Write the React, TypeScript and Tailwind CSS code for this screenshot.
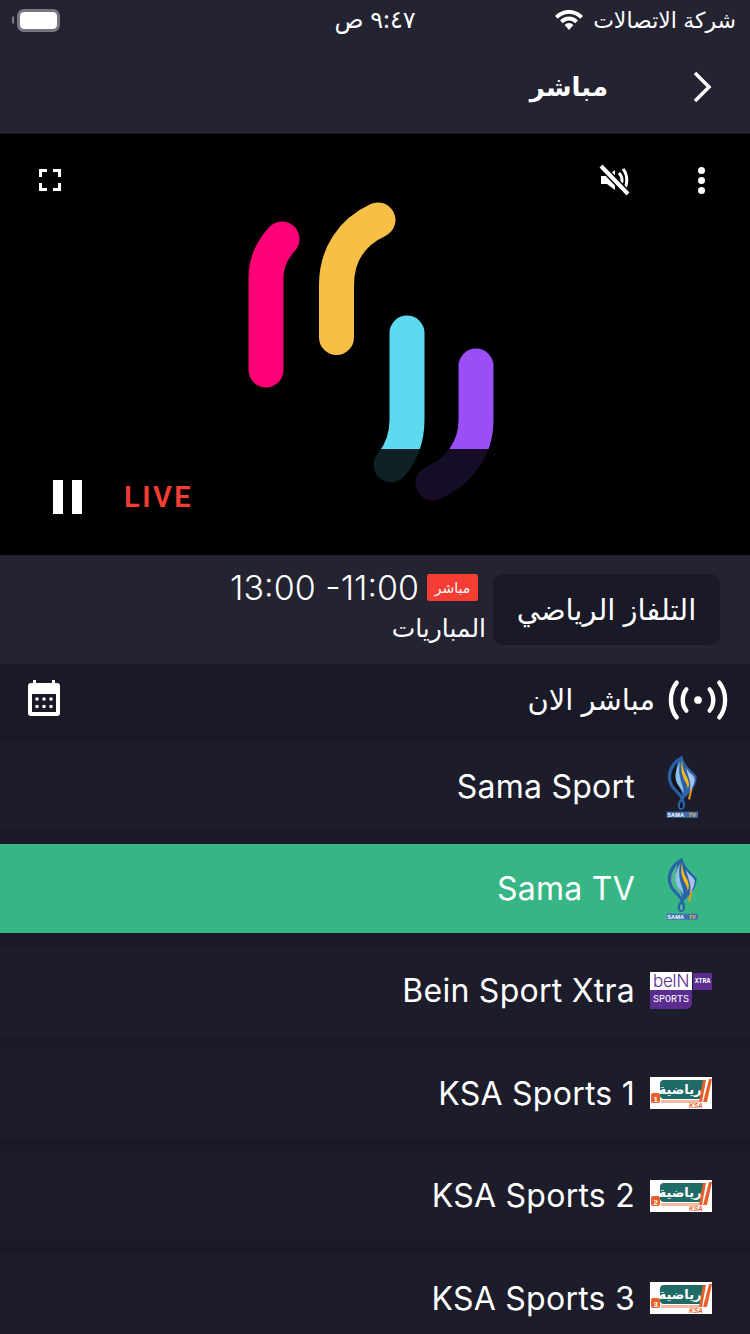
const CHANNELS = [
  { name: 'Sama Sport', logo: 'sama' },
  { name: 'Sama TV', logo: 'sama', active: true },
  { name: 'Bein Sport Xtra', logo: 'bein' },
  { name: 'KSA Sports 1', logo: 'ksa', num: '1' },
  { name: 'KSA Sports 2', logo: 'ksa', num: '2' },
  { name: 'KSA Sports 3', logo: 'ksa', num: '3' },
]

function SamaLogo({ active }: { active?: boolean }) {
  const gap = active ? '#4fb88f' : '#14141f'
  return (
    <svg width="34" height="65" viewBox="100 25 102 195">
      <path d="M155 30 C122 45 104 80 114 110 C122 135 145 145 150 160 C136 172 140 193 152 193 C166 190 166 172 158 160 C175 145 198 125 198 92 C185 75 160 60 155 30Z" fill="#2a62a8" />
      <path d="M140 50 C122 72 116 95 126 115 C132 128 146 136 154 150 C156 130 128 105 140 50Z" fill={gap} />
      <path d="M148 48 C134 72 130 96 140 114 C146 124 154 132 158 142 C162 120 138 100 148 48Z" fill="#8fc0e8" />
      <path d="M154 42 C148 70 154 90 164 108 C170 118 172 126 170 132 C180 116 172 100 164 86 C158 72 154 58 154 42Z" fill="#fdb913" />
      <path d="M166 66 C174 82 192 88 192 100 C192 116 184 128 176 136 C186 112 172 96 166 66Z" fill="#a9c3e6" />
      <path d="M180 130 L186 126 L178 162 L172 160Z" fill="#f39a1e" />
      <path d="M152 168 C146 174 146 186 152 188 C158 186 158 174 152 168Z" fill={gap} />
      <rect x="108" y="198" width="94" height="18" fill="#3f6fb0" />
      <text x="110" y="213" fontSize="17" fontWeight="700" fill="#fff" fontFamily="Liberation Sans">SAMA</text>
      <text x="174" y="213" fontSize="17" fontWeight="700" fill="#f7c21c" fontFamily="Liberation Sans">TV</text>
    </svg>
  )
}

function BeinLogo() {
  return (
    <div className="w-[62px] h-[37px] relative">
      <div className="absolute left-0 top-0 w-[42px] h-[18px] bg-white flex items-center justify-center">
        <span className="text-[17px] leading-none text-[#5b2d91] font-['Inter'] font-light tracking-tight">beIN</span>
      </div>
      <div className="absolute left-0 top-[18px] w-[42px] h-[19px] bg-[#5b2d91] rounded-br-[6px] flex items-center justify-center">
        <span className="text-[10px] leading-none text-white font-['Liberation_Mono']">SPORTS</span>
      </div>
      <div className="absolute left-[43px] top-[1px] w-[19px] h-[17px] bg-[#5b2d91] flex items-center justify-center">
        <span className="text-[6.5px] leading-none text-white font-['Liberation_Mono'] font-bold">XTRA</span>
      </div>
    </div>
  )
}

function KsaLogo({ num }: { num?: string }) {
  return (
    <svg width="62" height="32" viewBox="0 0 62 32" className="bg-white">
      <path d="M14 3 L54 3 L50 22 L14 22 Q10 22 10 18 L10 7 Q10 3 14 3Z" fill="#1f6b66" />
      <path d="M11 23 L50 23 L49 26 L11 26Z" fill="#f4b9a0" />
      <path d="M53 3 L56 3 L52 25 L49 25Z" fill="#e8602c" />
      <path d="M59 2 L62 2 L57 25 L53 25Z" fill="#e8602c" />
      <rect x="1" y="16" width="9" height="10" rx="2" fill="#e8602c" />
      <text x="3.500" y="24.500" fontSize="8" fontWeight="700" fill="#fff" fontFamily="Liberation Sans">{num}</text>
      <text x="30" y="17" fontSize="13" fontWeight="700" fill="#fff" fontFamily="DejaVu Sans" textAnchor="middle">رياضية</text>
      <text x="39" y="31" fontSize="6.500" fontWeight="700" fontStyle="italic" fill="#e8602c" fontFamily="Liberation Sans">KSA</text>
    </svg>
  )
}

function Logo({ kind, num, active }: { kind: string; num?: string; active?: boolean }) {
  if (kind === 'sama') return <SamaLogo active={active} />
  if (kind === 'bein') return <BeinLogo />
  return <KsaLogo num={num} />
}

// coordinates are page pixels, hence the viewBox offset
function PlayerArt() {
  return (
    <svg width="270" height="310" viewBox="240 195 270 310" fill="none" strokeWidth="35" strokeLinecap="round">
      <path d="M266 370 L266 278 C266 262 272 250 282 239" stroke="#ff0076" />
      <path d="M336.500 337.500 L336.500 285 C336.500 255 352 232 378 220" stroke="#f8bf47" />
      <path d="M407 333 L407 420 C407 438 402 452 391 465" stroke="#5cdaf0" />
      <path d="M476 366 L476 420 C476 450 458 472 433 483" stroke="#994ff5" />
      <rect x="360" y="449" width="150" height="56" fill="#000" fillOpacity="0.85" />
    </svg>
  )
}

export default function App() {
  return (
    <div className="w-[750px] h-[1334px] overflow-hidden bg-[#191927] text-white font-['Inter','DejaVu_Sans',sans-serif]">
      {/* status + nav */}
      <div className="h-[134px] bg-[#232332] border-b border-[#1a1a24]">
        <div className="h-10 flex items-center justify-between pl-[12px] pr-[14px]">
          <div className="flex items-center">
            <div className="w-[2px] h-[8px] bg-[#77777f] mr-[3px] rounded-l-full" />
            <div className="w-[43px] h-[23px] border-[3px] border-[#77777f] rounded-[7px] bg-[#14141f]">
              <div className="w-full h-full bg-white rounded-[4px]" />
            </div>
          </div>
          <span className="text-[24px] leading-none ml-[136px]" dir="rtl">٩:٤٧ ص</span>
          <div className="flex items-center gap-[9px]">
            <svg width="30" height="20" viewBox="0 0 28 20" fill="white">
              <path d="M14 0 C8 0 3.500 2.500 0 6 L2.800 8.800 C5.500 6 9.500 3.800 14 3.800 C18.500 3.800 22.500 6 25.200 8.800 L28 6 C24.500 2.500 20 0 14 0Z" />
              <path d="M14 6.500 C10.500 6.500 7.500 8 5 10.500 L7.800 13.200 C9.500 11.500 11.500 10.400 14 10.400 C16.500 10.400 18.500 11.500 20.200 13.200 L23 10.500 C20.500 8 17.500 6.500 14 6.500Z" />
              <path d="M14 13 C12.200 13 10.800 13.700 9.600 15 L14 20 L18.400 15 C17.200 13.700 15.800 13 14 13Z" />
            </svg>
            <span className="text-[22px]" dir="rtl">شركة الاتصالات</span>
          </div>
        </div>
        <div className="h-[93px] flex items-center justify-end pr-[38px]">
          <span className="text-[26px] font-bold mr-[84px]" dir="rtl">مباشر</span>
          <svg width="20" height="32" viewBox="0 0 20 32" fill="none" stroke="white" strokeWidth="3.500">
            <path d="M3 2 L17 16 L3 30" />
          </svg>
        </div>
      </div>

      {/* player */}
      <div className="h-[421px] bg-black relative">
        <div className="absolute left-[39px] top-[35px]">
          <svg width="22" height="22" viewBox="0 0 22 22" fill="none" stroke="white" strokeWidth="3">
            <path d="M1.500 8 V1.500 H8 M14 1.500 H20.500 V8 M1.500 14 V20.500 H8 M14 20.500 H20.500 V14" />
          </svg>
        </div>
        <div className="absolute left-[597px] top-[29px]">
          <svg width="34" height="34" viewBox="0 0 34 34" fill="white">
            <path d="M4 13 H10 L18 7 V27 L10 21 H4 Z" />
            <path d="M22 10 C26 14 26 20 22 24 M26 6 C31 12 31 22 26 28" fill="none" stroke="white" strokeWidth="3" />
            <path d="M4 3 L31 31" stroke="#000" strokeWidth="7" />
            <path d="M4 3 L31 31" stroke="white" strokeWidth="4" />
          </svg>
        </div>
        <div className="absolute left-[698px] top-[33px] flex flex-col gap-[3px]">
          <span className="w-[7px] h-[7px] rounded-full bg-white" />
          <span className="w-[7px] h-[7px] rounded-full bg-white" />
          <span className="w-[7px] h-[7px] rounded-full bg-white" />
        </div>
        <div className="absolute left-[240px] top-[61px]">
          <PlayerArt />
        </div>
        <div className="absolute left-[53px] top-[346px] flex gap-[9px]">
          <span className="w-[10px] h-[34px] bg-white" />
          <span className="w-[10px] h-[34px] bg-white" />
        </div>
        <span className="absolute left-[124px] top-[344px] text-[29px] font-semibold text-[#f63d33] leading-[38px] font-['Roboto'] tracking-[2.5px]">LIVE</span>
      </div>

      {/* now playing */}
      <div className="h-[109px] bg-[#232332] flex justify-end pr-[30px] pt-[19px] gap-[15px]">
        <div className="flex flex-col items-end">
          <div className="flex items-center gap-[8px] h-[27px] mr-[0px]">
            <span className="text-[34px] font-light leading-none" dir="ltr">13:00 -11:00</span>
            <span className="w-[51px] h-[27px] bg-[#f63d33] rounded-[2px] text-[14px] flex items-center justify-center" dir="rtl">مباشر</span>
          </div>
          <span className="text-[25px] mt-[9px] leading-[36px] mr-[-8px]" dir="rtl">المباريات</span>
        </div>
        <div className="w-[227px] h-[71px] bg-[#191927] rounded-[10px] flex items-center justify-center">
          <span className="text-[29px]" dir="rtl">التلفاز الرياضي</span>
        </div>
      </div>

      {/* section header */}
      <div className="h-[78px] flex items-center justify-between pl-[28px] pr-[22px] pb-[7px]">
        <svg width="32" height="36" viewBox="0 0 32 36" fill="white" className="-translate-y-[2px]">
          <rect x="5" y="0" width="3" height="6" />
          <rect x="24" y="0" width="3" height="6" />
          <path d="M3 3 H29 Q32 3 32 6 V33 Q32 36 29 36 H3 Q0 36 0 33 V6 Q0 3 3 3Z" />
          <rect x="4" y="14" width="24" height="18" fill="#191927" />
          <g fill="white">
            <circle cx="9" cy="19" r="1.800" /><circle cx="16" cy="19" r="1.800" /><circle cx="23" cy="19" r="1.800" />
            <circle cx="9" cy="26.500" r="1.800" /><circle cx="16" cy="26.500" r="1.800" /><circle cx="23" cy="26.500" r="1.800" />
          </g>
        </svg>
        <div className="flex items-center gap-[13px]">
          <span className="text-[29px] leading-none" dir="rtl">مباشر الان</span>
          <svg width="60" height="42" viewBox="0 0 62 42" fill="none" stroke="white" strokeWidth="4.500" strokeLinecap="round">
            <path d="M9 3 C1 13 1 29 9 39" />
            <path d="M19 10 C14 16 14 26 19 32" />
            <path d="M43 10 C48 16 48 26 43 32" />
            <path d="M53 3 C61 13 61 29 53 39" />
            <circle cx="31" cy="21" r="4" fill="white" stroke="none" />
          </svg>
        </div>
      </div>

      {/* channels */}
      <div className="flex flex-col gap-[14px]">
        {CHANNELS.map((c) => (
          <div
            key={c.name}
            className={`h-[88.4px] shrink-0 flex items-center justify-end pr-[38px] gap-[15px] ${c.active ? 'bg-[#36b685]' : 'bg-[#1c1c2a]'}`}
          >
            <span className="text-[32px] tracking-[0.25px] pt-[1px]">{c.name}</span>
            <div className="w-[62px] flex justify-center">
              <Logo kind={c.logo} num={c.num} active={c.active} />
            </div>
          </div>
        ))}
      </div>
    </div>
  )
}
